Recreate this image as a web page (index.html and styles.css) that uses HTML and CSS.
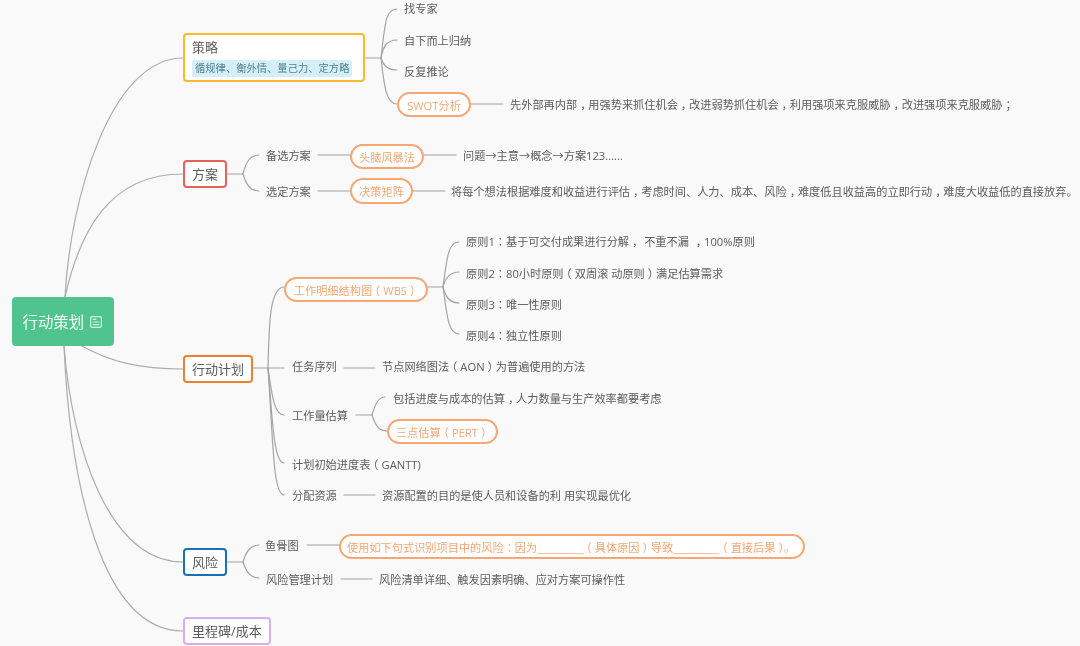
FILE: index.html
```html
<!DOCTYPE html>
<html>
<head>
<meta charset="utf-8">
<title>行动策划</title>
<link rel="stylesheet" href="styles.css">
</head>
<body>
<main class="canvas">
  <svg class="links" width="1080" height="646" viewBox="0 0 1080 646" fill="none">
    <g class="trunk">
      <path d="M65 297C70 200 110 58 183 58"/>
      <path d="M65 297C80 230 110 174 183 174"/>
      <path d="M80 345C110 362 140 369 183 369"/>
      <path d="M64 346C72 450 110 562 183 562"/>
      <path d="M64 346C70 480 100 631 183 631"/>
    </g>
    <g class="branch">
      <path d="M365 58H381"/>
      <path d="M381 58C385 25 385 9 397 9"/>
      <path d="M381 58C383 46 387 40 397 40"/>
      <path d="M381 58C383 65 387 70 397 70"/>
      <path d="M381 58C384 85 386 104 397 104"/>
      <path d="M470 104H503"/>
      <path d="M227 174H243"/>
      <path d="M243 174C246 162 250 155 259 155"/>
      <path d="M243 174C246 184 250 191 259 191"/>
      <path d="M318 155H350M423 155H456"/>
      <path d="M318 191H350M412 191H445"/>
      <path d="M253 368H268"/>
      <path d="M268 368C269 330 269 287 284 287"/>
      <path d="M268 368H284"/>
      <path d="M268 368C272 395 274 415 284 415"/>
      <path d="M268 368C272 410 273 463 284 463"/>
      <path d="M268 368C273 440 273 495 284 495"/>
      <path d="M428 287H443"/>
      <path d="M443 287C447 258 448 242 459 242"/>
      <path d="M443 287C445 279 449 272 459 272"/>
      <path d="M443 287C445 296 449 303 459 303"/>
      <path d="M443 287C447 315 448 334 459 334"/>
      <path d="M344 368H375"/>
      <path d="M356 415H372"/>
      <path d="M372 415C375 405 378 397 385 397"/>
      <path d="M372 415C375 424 378 431 387 431"/>
      <path d="M344 495H375"/>
      <path d="M227 562H243"/>
      <path d="M243 562C246 552 250 545 259 545"/>
      <path d="M243 562C246 571 250 578 259 578"/>
      <path d="M307 545H339"/>
      <path d="M341 579H372"/>
    </g>
  </svg>

  <div class="root">
    <span>行动策划</span>
    <svg class="note-icon" width="12" height="12" viewBox="0 0 12 12" fill="none">
      <rect x="0.7" y="0.7" width="10.6" height="10.6" rx="1"/>
      <path d="M2.8 3.4H6.5M2.8 6H9.2M2.8 8.6H9.2"/>
    </svg>
  </div>

  <div class="topic strategy">
    <div>策略</div>
    <div class="tag">循规律、衡外情、量己力、定方略</div>
  </div>
  <div class="topic plan">方案</div>
  <div class="topic action">行动计划</div>
  <div class="topic risk">风险</div>
  <div class="topic milestone">里程碑/成本</div>

  <span class="text t-expert">找专家</span>
  <span class="text t-induct">自下而上归纳</span>
  <span class="text t-infer">反复推论</span>
  <span class="pill p-swot">SWOT分析</span>
  <span class="text t-swot">先外部再内部<span class="cm">，</span>用强势来抓住机会<span class="cm">，</span>改进弱势抓住机会<span class="cm">，</span>利用强项来克服威胁<span class="cm">，</span>改进强项来克服威胁<span class="cm">；</span></span>

  <span class="text t-alt">备选方案</span>
  <span class="pill p-brain">头脑风暴法</span>
  <span class="text t-brain">问题→主意→概念→方案123......</span>
  <span class="text t-chosen">选定方案</span>
  <span class="pill p-matrix">决策矩阵</span>
  <span class="text t-matrix">将每个想法根据难度和收益进行评估<span class="cm">，</span>考虑时间、人力、成本、风险<span class="cm">，</span>难度低且收益高的立即行动<span class="cm">，</span>难度大收益低的直接放弃。</span>

  <span class="pill p-wbs"><span>工作明细结构<span class="pre">图</span><span class="op">（</span>WBS<span class="cm">）</span></span></span>
  <span class="text t-r1">原则1<span class="mid">：</span>基于可交付成果进行分解<span class="cm">，</span> 不重不漏 <span class="cm">，</span>100%原则</span>
  <span class="text t-r2">原则2<span class="mid">：</span>80小时原<span class="pre">则</span><span class="op">（</span>双周滚 动原则<span class="cm">）</span>满足估算需求</span>
  <span class="text t-r3">原则3<span class="mid">：</span>唯一性原则</span>
  <span class="text t-r4">原则4<span class="mid">：</span>独立性原则</span>
  <span class="text t-seq">任务序列</span>
  <span class="text t-aon">节点网络图<span class="pre">法</span><span class="op">（</span>AON<span class="cm">）</span>为普遍使用的方法</span>
  <span class="text t-est">工作量估算</span>
  <span class="text t-cost">包括进度与成本的估算<span class="cm">，</span>人力数量与生产效率都要考虑</span>
  <span class="pill p-pert"><span>三点估<span class="pre">算</span><span class="op">（</span>PERT<span class="cm">）</span></span></span>
  <span class="text t-gantt">计划初始进度<span class="pre">表</span><span class="op">（</span>GANTT)</span>
  <span class="text t-res">分配资源</span>
  <span class="text t-opt">资源配置的目的是使人员和设备的利 用实现最优化</span>

  <span class="text t-fish">鱼骨图</span>
  <span class="pill p-sentence"><span>使用如下句式识别项目中的风险<span class="mid">：</span>因为<span class="blank">_________</span><span class="pre">_</span><span class="op">（</span>具体原因<span class="cm">）</span>导致<span class="blank">_________</span><span class="pre">_</span><span class="op">（</span>直接后果<span class="cm">）</span><span class="cm">。</span></span></span>
  <span class="text t-riskplan">风险管理计划</span>
  <span class="text t-list">风险清单详细、触发因素明确、应对方案可操作性</span>
</main>
</body>
</html>
```

FILE: styles.css
```css
* { box-sizing: border-box; }

html, body {
  margin: 0;
  padding: 0;
  background: #f9f9f9;
}

.canvas {
  position: relative;
  width: 1080px;
  height: 646px;
  overflow: hidden;
  background: #f9f9f9;
  font-family: "Open Sans", "Noto Sans CJK SC", sans-serif;
  color: #5c5c5c;
  filter: blur(0.4px);
}

/* full-width punctuation centred in its em box */
.mid { font-family: "Noto Sans CJK TC", sans-serif; }
.cm { margin-left: 3px; letter-spacing: -3px; }
.pre { letter-spacing: -3px; }
.op { letter-spacing: 3px; }
.blank { letter-spacing: -0.3px; }

.links { position: absolute; left: 0; top: 0; }
.links path { stroke-width: 1.2; stroke-linecap: round; }
.trunk path { stroke: #acacac; }
.branch path { stroke: #a4a4a4; }

.root {
  position: absolute;
  left: 12px;
  top: 297px;
  width: 102px;
  height: 49px;
  display: flex;
  align-items: center;
  padding: 3px 0 0 10.5px;
  gap: 6px;
  background: #50c48f;
  border-radius: 4px;
  color: #f0fbf5;
  font-size: 15.4px;
  line-height: 20px;
}
.note-icon { flex: none; margin-top: -2px; }
.note-icon rect, .note-icon path { stroke: #d6f1e4; stroke-width: 1.2; }

.topic {
  position: absolute;
  left: 183px;
  display: flex;
  flex-direction: column;
  justify-content: center;
  padding: 0 7px;
  background: #fff;
  border: 2px solid;
  border-radius: 4px;
  font-size: 13px;
  line-height: 16px;
  white-space: nowrap;
}
.strategy { top: 33px; width: 182px; height: 49px; border-color: #fdb92e; gap: 5px; padding-top: 1px; }
.plan { top: 160px; width: 44px; height: 28px; border-color: #e8625c; }
.action { top: 355px; width: 70px; height: 28px; border-color: #e98032; }
.risk { top: 548px; width: 44px; height: 28px; border-color: #1c6fb4; }
.milestone { top: 617px; width: 88px; height: 28px; border-color: #d9aeee; }

.tag {
  align-self: flex-start;
  height: 17px;
  padding: 0 3px;
  background: #d4eff7;
  border-radius: 2px;
  color: #50808f;
  font-size: 10.3px;
  line-height: 17px;
}

.text {
  position: absolute;
  font-size: 11.2px;
  line-height: 16px;
  white-space: nowrap;
}

.pill {
  position: absolute;
  display: flex;
  align-items: center;
  justify-content: center;
  height: 25px;
  background: #fff;
  border: 2px solid #f8a673;
  border-radius: 13px;
  color: #f8a673;
  font-size: 11.2px;
  white-space: nowrap;
}

.t-expert { left: 404px; top: 1px; }
.t-induct { left: 404px; top: 33px; }
.t-infer { left: 404px; top: 64px; }
.p-swot { left: 397px; top: 92px; width: 74px; }
.t-swot { left: 510px; top: 97px; }

.t-alt { left: 266px; top: 148px; }
.p-brain { left: 350px; top: 144px; width: 74px; }
.t-brain { left: 463px; top: 148px; }
.t-chosen { left: 266px; top: 184px; }
.p-matrix { left: 350px; top: 178px; width: 63px; height: 26px; }
.t-matrix { left: 451px; top: 184px; }

.p-wbs { left: 284px; top: 277px; width: 144px; }
.t-r1 { left: 466px; top: 233px; word-spacing: 1px; }
.t-r2 { left: 466px; top: 265px; }
.t-r3 { left: 466px; top: 296px; }
.t-r4 { left: 466px; top: 327px; }
.t-seq { left: 292px; top: 359px; }
.t-aon { left: 382px; top: 359px; }
.t-est { left: 292px; top: 408px; }
.t-cost { left: 393px; top: 391px; }
.p-pert { left: 387px; top: 419px; width: 111px; }
.t-gantt { left: 292px; top: 457px; }
.t-res { left: 292px; top: 488px; }
.t-opt { left: 382px; top: 488px; }

.t-fish { left: 265px; top: 538px; }
.p-sentence { left: 339px; top: 534px; width: 466px; justify-content: flex-start; padding-left: 6px; }
.t-riskplan { left: 266px; top: 572px; }
.t-list { left: 379px; top: 572px; }
```
